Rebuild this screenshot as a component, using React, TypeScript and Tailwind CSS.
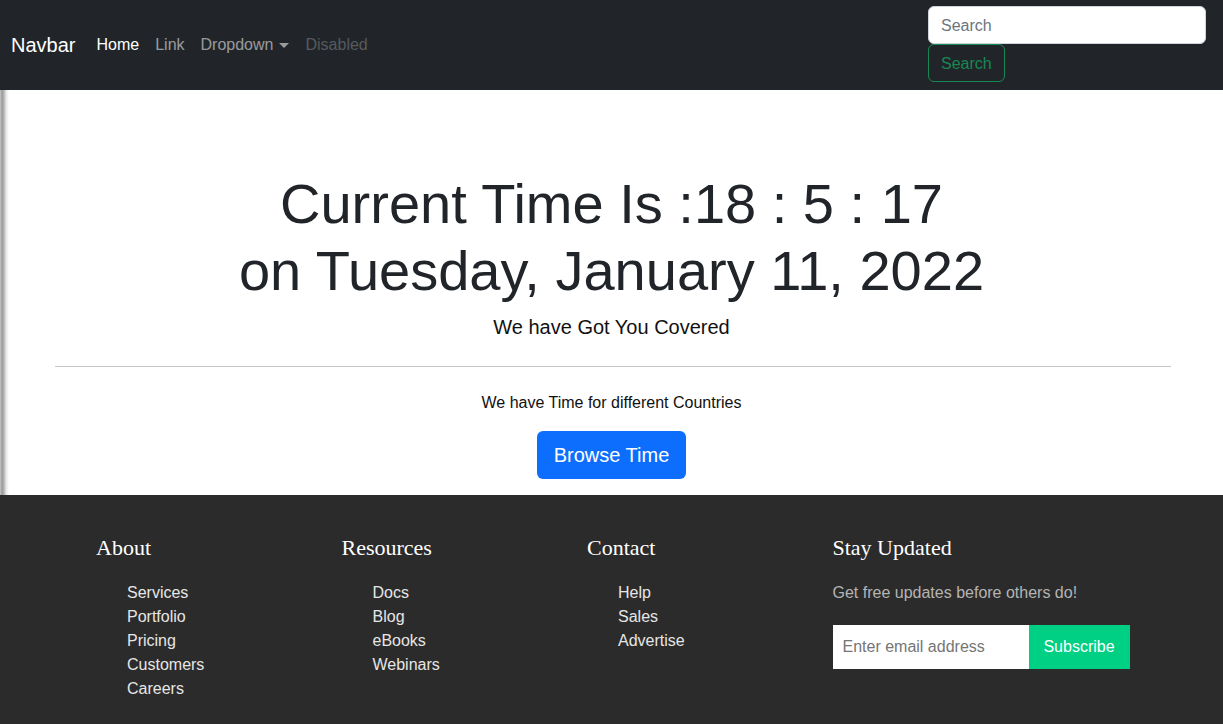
import React from "react";

const font = { fontFamily: '"Liberation Sans", Arial, sans-serif' };
const serif = { fontFamily: '"Liberation Serif", "Times New Roman", serif' };

export default function App() {
  const aboutLinks = ["Services", "Portfolio", "Pricing", "Customers", "Careers"];
  const resLinks = ["Docs", "Blog", "eBooks", "Webinars"];
  const contactLinks = ["Help", "Sales", "Advertise"];
  return (
    <div className="w-[1223px] min-h-[724px] bg-[#2b2b2b]" style={font}>
      {/* Navbar */}
      <nav className="h-[90px] bg-[#212529] flex items-start justify-between pl-[11px] pr-[17px]">
        <div className="flex items-center h-[89px]">
          <span className="text-[20px] text-white mr-[13px] leading-[30px]">Navbar</span>
          <ul className="flex items-center text-[16px] leading-[24px]">
            <li className="px-[8px] text-white">Home</li>
            <li className="px-[8px] text-[rgba(255,255,255,0.55)]">Link</li>
            <li className="px-[8px] text-[rgba(255,255,255,0.55)] flex items-center">
              Dropdown
              <span className="ml-[6px] mt-[2px] w-0 h-0 border-t-[5px] border-t-[rgba(255,255,255,0.55)] border-x-[5px] border-x-transparent"></span>
            </li>
            <li className="px-[8px] text-[rgba(255,255,255,0.25)]">Disabled</li>
          </ul>
        </div>
        <div className="flex flex-col items-start pt-[6px]">
          <div className="w-[278px] h-[38px] bg-white border border-[#ced4da] rounded-[6px] flex items-center px-[12px] pt-[1px] text-[16px] text-[#6c757d]">
            Search
          </div>
          <div className="h-[38px] px-[12px] pt-[1px] border border-[#198754] rounded-[6px] flex items-center text-[16px] text-[#198754]">
            Search
          </div>
        </div>
      </nav>

      {/* Main */}
      <main className="relative bg-white flex flex-col items-center pt-[80px] pb-[16px] text-[#212529]">
        <div className="absolute left-0 top-0 bottom-0 w-[9px] bg-[linear-gradient(to_right,#c8c8c8_0px,#9a9a9a_2px,#b5b5b5_4px,#e6e6e6_6px,#ffffff_9px)]"></div>
        <h1 className="text-[56px] leading-[67px] text-center font-normal">
          Current Time Is :18 : 5 : 17
          <br />
          on Tuesday, January 11, 2022
        </h1>
        <h5 className="text-[20px] leading-[24px] mt-[11px] text-[#111]">We have Got You Covered</h5>
        <hr className="w-[1116px] mt-[27px] border-t border-[#c6c7c8] ml-[3px]" />
        <p className="text-[16px] leading-[24px] mt-[24px] text-[#111]">We have Time for different Countries</p>
        <button className="mt-[16px] h-[48px] px-[17px] bg-[#0d6efd] text-white text-[20px] rounded-[6px]">
          Browse Time
        </button>
      </main>

      {/* Footer */}
      <footer className="bg-[#2b2b2b] pl-[96px] pt-[40px] pb-[24px] flex">
        <FooterCol title="About" links={aboutLinks} />
        <FooterCol title="Resources" links={resLinks} />
        <FooterCol title="Contact" links={contactLinks} />
        <div className="w-[300px]">
          <h3 className="text-[22px] leading-[26px] text-white" style={serif}>
            Stay Updated
          </h3>
          <p className="mt-[20px] text-[16px] leading-[24px] text-[#b4b4b4]">Get free updates before others do!</p>
          <div className="mt-[20px] flex h-[44px]">
            <div className="w-[196px] bg-white flex items-center px-[10px] text-[16px] text-[#757575]">Enter email address</div>
            <div className="w-[101px] bg-[#00d084] flex items-center justify-center text-[16px] text-white">Subscribe</div>
          </div>
        </div>
      </footer>
    </div>
  );
}

function FooterCol({ title, links }: { title: string; links: string[] }) {
  return (
    <div className="w-[245.5px]">
      <h3 className="text-[22px] leading-[26px] text-white" style={serif}>
        {title}
      </h3>
      <ul className="mt-[20px] pl-[31px] text-[16px] leading-[24px] text-[#e6e6e6]">
        {links.map((l) => (
          <li key={l}>{l}</li>
        ))}
      </ul>
    </div>
  );
}
